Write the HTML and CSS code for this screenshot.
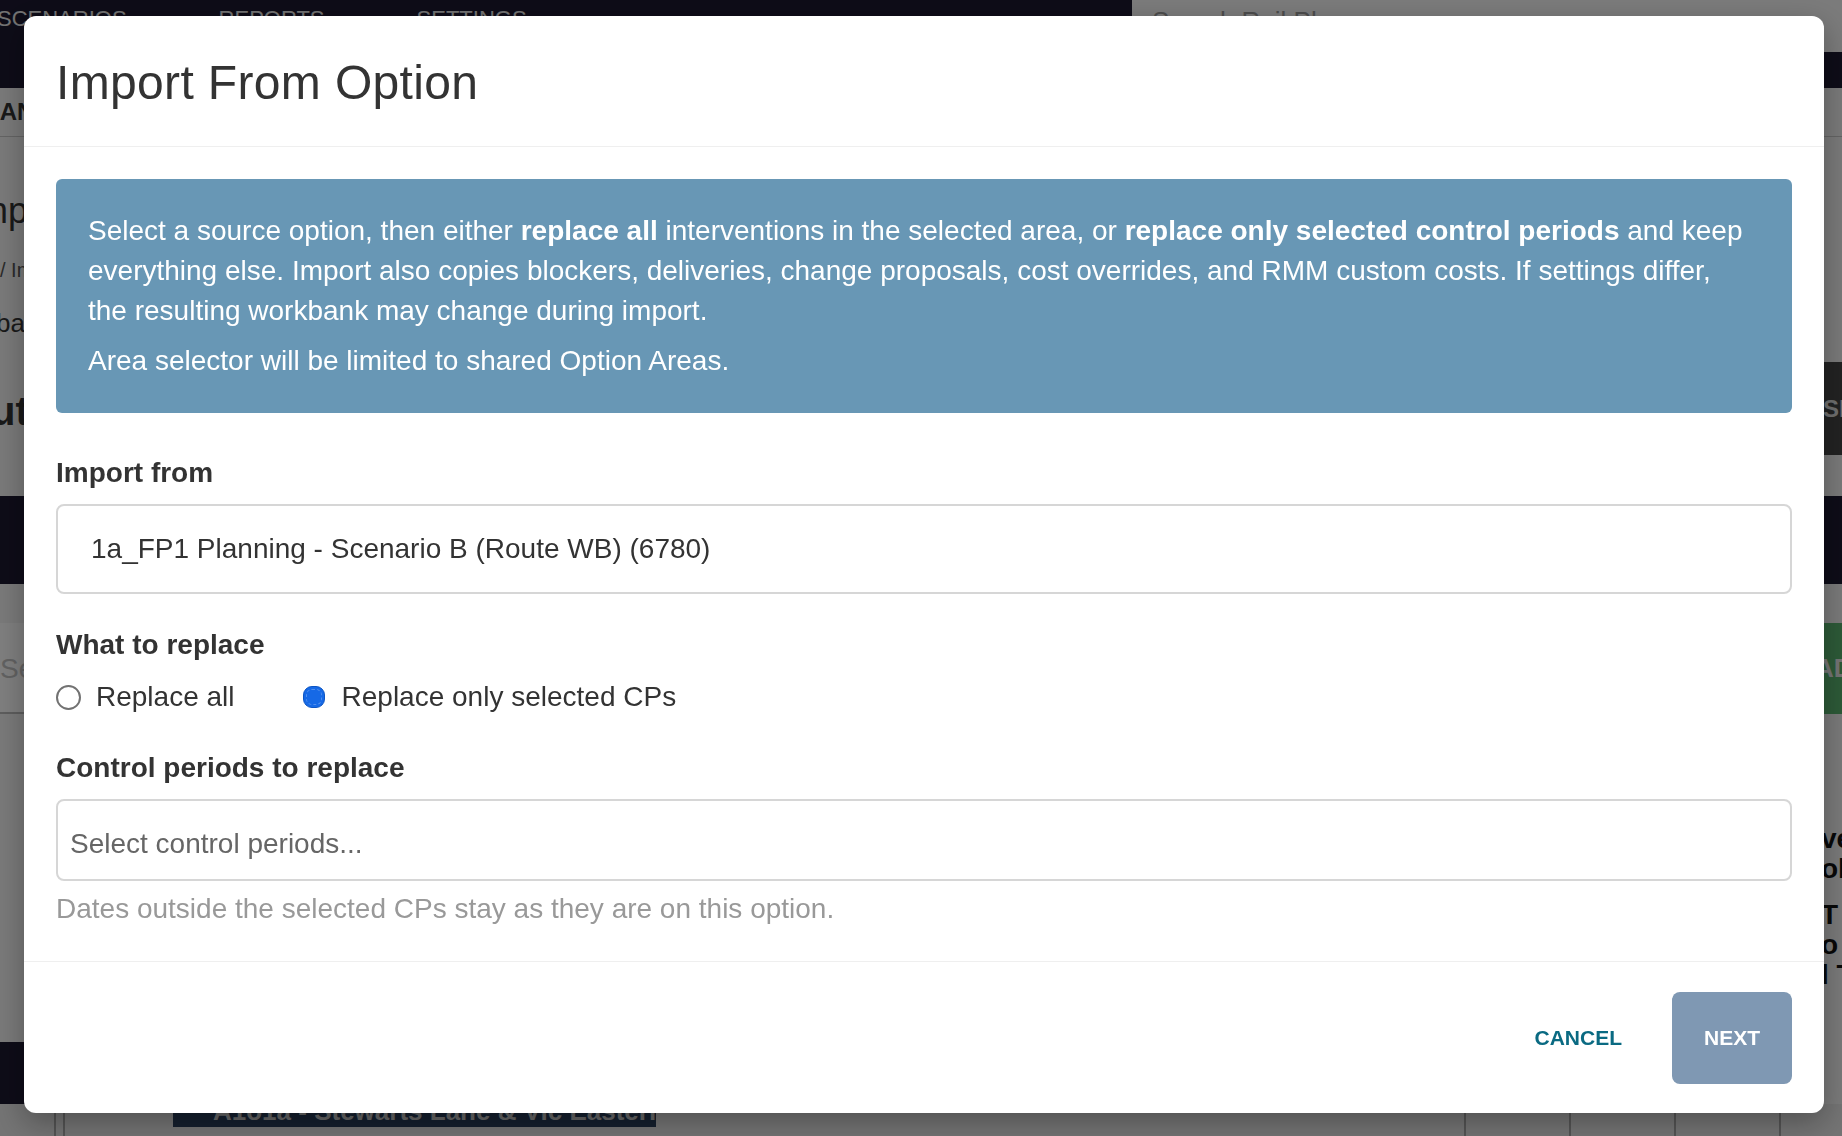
FILE: index.html
```html
<!DOCTYPE html>
<html lang="en">
<head>
    <meta charset="UTF-8">
    <meta name="viewport" content="width=device-width, initial-scale=1.0">
    <title>Import From Option</title>
    <link rel="stylesheet" href="styles.css">
</head>
<body>
    <div class="app">
        <header class="topbar">
            <nav class="topbar-nav">
                <a class="nav-link">SCENARIOS</a>
                <a class="nav-link">REPORTS</a>
                <a class="nav-link">SETTINGS</a>
            </nav>
            <div class="topbar-side">
                <div class="search-field">Search Rail Plans</div>
                <div class="account-bar"></div>
            </div>
        </header>

        <div class="subnav">PLANNING</div>

        <section class="overview">
            <div class="overview-text">
                <h1 class="page-title">Import Options</h1>
                <div class="crumbs">/ Import / Options</div>
                <p class="page-sub">ba</p>
                <h2 class="page-heading">Output</h2>
            </div>
            <aside class="overview-side">
                <div class="side-box">SIM</div>
            </aside>
        </section>

        <div class="band"></div>

        <section class="toolbar">
            <div class="toolbar-main">
                <div class="search-input">Search</div>
            </div>
            <aside class="toolbar-side">
                <div class="add-btn">ADD</div>
                <div class="side-notes">
                    <p>ve</p>
                    <p>ol</p>
                    <p class="gap">T</p>
                    <p>o</p>
                    <p>l T</p>
                </div>
            </aside>
        </section>

        <div class="table-head"></div>
        <div class="table-row">
            <div class="cell cell-a"></div>
            <div class="cell cell-b"></div>
            <div class="cell cell-route"><span class="route-tag">A1o1a - Stewarts Lane &amp; Vic Eastern</span></div>
            <div class="cell cell-c"></div>
            <div class="cell cell-c"><span class="flag"></span></div>
            <div class="cell cell-c"></div>
            <div class="cell"></div>
        </div>
    </div>

    <!-- Import dialog -->
    <div class="modal-backdrop">
        <div class="modal">
            <div class="modal-header">
                <h4 class="modal-title">Import From Option</h4>
            </div>

            <div class="modal-body">
                <div class="alert-info">
                    <p>Select a source option, then either <b>replace all</b> interventions in the selected area, or <b>replace only selected control periods</b> and keep everything else. Import also copies blockers, deliveries, change proposals, cost overrides, and RMM custom costs. If settings differ, the resulting workbank may change during import.</p>
                    <p>Area selector will be limited to shared Option Areas.</p>
                </div>

                <div class="form-group">
                    <label class="field-label">Import from</label>
                    <div class="select-box">1a_FP1 Planning - Scenario B (Route WB) (6780)</div>
                </div>

                <div class="form-group">
                    <div class="field-label label-tight">What to replace</div>
                    <div class="radio-row">
                        <label class="radio-option">
                            <span class="radio"></span>
                            Replace all
                        </label>
                        <label class="radio-option">
                            <span class="radio checked"></span>
                            Replace only selected CPs
                        </label>
                    </div>
                </div>

                <div class="form-group last">
                    <label class="field-label">Control periods to replace</label>
                    <div class="multi-select">Select control periods...</div>
                    <p class="help-block">Dates outside the selected CPs stay as they are on this option.</p>
                </div>
            </div>

            <div class="modal-footer">
                <button class="btn-cancel">CANCEL</button>
                <button class="btn-next">NEXT</button>
            </div>
        </div>
    </div>
</body>
</html>
```

FILE: styles.css
```css
* {
    margin: 0;
    padding: 0;
    box-sizing: border-box;
}

html, body {
    width: 100%;
    height: 100%;
}

body {
    font-family: "Liberation Sans", Arial, Helvetica, sans-serif;
    background: #f4f4f4;
    color: #333;
    overflow: hidden;
}

/* Page behind the dialog */
.app {
    height: 100vh;
    display: flex;
    flex-direction: column;
    overflow: hidden;
}

.topbar {
    display: flex;
    height: 88px;
    flex-shrink: 0;
}

.topbar-nav {
    width: 1132px;
    background: #1c1930;
    display: flex;
    gap: 92px;
    padding-top: 6px;
}

.nav-link {
    color: #e6e6e6;
    font-size: 22px;
    line-height: 26px;
}

.nav-link:first-child {
    margin-left: -3px;
}

.topbar-side {
    flex: 1;
    display: flex;
    flex-direction: column;
}

.search-field {
    height: 52px;
    background: #f7f7f7;
    padding: 6px 20px;
    font-size: 26px;
    color: #9a9a9a;
}

.account-bar {
    flex: 1;
    background: #1c1930;
}

.subnav {
    height: 49px;
    flex-shrink: 0;
    border-bottom: 1px solid #c8c8c8;
    font-size: 24px;
    font-weight: bold;
    line-height: 48px;
    text-indent: -31px;
    color: #333;
}

.overview {
    height: 359px;
    flex-shrink: 0;
    display: flex;
    justify-content: space-between;
}

.page-title {
    margin-top: 54px;
    font-size: 36px;
    line-height: 40px;
    font-weight: normal;
    text-indent: -32px;
}

.crumbs {
    margin-top: 27px;
    font-size: 20px;
    line-height: 24px;
    color: #555;
}

.page-sub {
    margin-top: 29px;
    font-size: 26px;
    line-height: 24px;
    text-indent: -4px;
}

.page-heading {
    margin-top: 52px;
    font-size: 40px;
    line-height: 48px;
    font-weight: bold;
    text-indent: -40px;
}

.overview-side {
    width: 120px;
}

.side-box {
    margin-top: 225px;
    height: 93px;
    background: #454545;
    color: #ddd;
    font-size: 24px;
    font-weight: bold;
    line-height: 93px;
    padding-left: 101px;
    white-space: nowrap;
    overflow: hidden;
}

.band {
    height: 88px;
    flex-shrink: 0;
    background: #1c1930;
}

.toolbar {
    height: 458px;
    flex-shrink: 0;
    display: flex;
    justify-content: space-between;
}

.search-input {
    margin-top: 39px;
    width: 400px;
    height: 91px;
    background: #fff;
    border-bottom: 2px solid #bbb;
    font-size: 28px;
    line-height: 91px;
    color: #c4c4c4;
}

.toolbar-side {
    width: 120px;
}

.add-btn {
    margin-top: 39px;
    height: 91px;
    background: #5ab470;
    color: #e8e8e8;
    font-size: 26px;
    font-weight: bold;
    line-height: 91px;
    padding-left: 93px;
    white-space: nowrap;
    overflow: hidden;
}

.side-notes {
    margin-top: 110px;
    padding-left: 99px;
    font-size: 28px;
    font-weight: bold;
    line-height: 30px;
    color: #111;
    white-space: nowrap;
}

.side-notes .gap {
    margin-top: 16px;
}

.table-head {
    width: 1100px;
    height: 62px;
    flex-shrink: 0;
    background: #1c1930;
}

.table-row {
    display: flex;
    height: 40px;
    flex-shrink: 0;
    background: #e8e8e8;
}

.cell {
    height: 100%;
    border-right: 2px solid #a8a8a8;
}

.cell:last-child {
    flex: 1;
    border-right: 0;
}

.cell-a {
    width: 56px;
}

.cell-b {
    width: 9px;
}

.cell-route {
    width: 1401px;
    padding-left: 108px;
}

.route-tag {
    display: block;
    width: 483px;
    height: 23px;
    background: #2a3f5c;
    color: #ccc;
    font-size: 26px;
    font-weight: bold;
    line-height: 14px;
    white-space: nowrap;
    overflow: hidden;
    padding-left: 40px;
}

.cell-c {
    width: 105px;
    position: relative;
}

.flag {
    position: absolute;
    left: 50px;
    bottom: 0;
    width: 10px;
    height: 6px;
    background: #d8d000;
}

/* Dialog */
.modal-backdrop {
    position: fixed;
    top: 0;
    left: 0;
    width: 100%;
    height: 100%;
    background: rgba(0, 0, 0, 0.5);
    padding: 16px 0 0 24px;
    z-index: 100;
}

.modal {
    width: 1800px;
    background: #fff;
    border-radius: 12px;
    box-shadow: 0 10px 30px rgba(0, 0, 0, 0.3);
}

.modal-header {
    padding: 38px 32px 34px;
    border-bottom: 1px solid #efefef;
}

.modal-title {
    font-size: 48px;
    line-height: 58px;
    font-weight: normal;
    letter-spacing: 0.35px;
    color: #333;
}

.modal-body {
    padding: 32px 32px 32px;
}

.alert-info {
    background: #6897b5;
    color: #fff;
    border-radius: 6px;
    padding: 32px 43px 32px 32px;
    margin-bottom: 40px;
    font-size: 28px;
    line-height: 40px;
}

.alert-info p + p {
    margin-top: 10px;
}

.form-group {
    margin-bottom: 31px;
}

.form-group.last {
    margin-bottom: 0;
}

.field-label {
    display: block;
    font-size: 28px;
    line-height: 40px;
    font-weight: bold;
    color: #333;
    margin-bottom: 11px;
}

.field-label.label-tight {
    margin-bottom: 12px;
}

.select-box {
    height: 90px;
    border: 2px solid #d6d6d6;
    border-radius: 8px;
    padding-left: 33px;
    font-size: 28px;
    line-height: 86px;
    color: #333;
}

.radio-row {
    display: flex;
    align-items: center;
    height: 40px;
    gap: 67px;
}

.radio-option {
    display: flex;
    align-items: center;
    font-size: 28px;
    line-height: 40px;
    color: #333;
}

.radio {
    width: 25px;
    height: 25px;
    border: 2px solid #727272;
    border-radius: 50%;
    background: #fff;
    margin-right: 15px;
}

.radio.checked {
    width: 22px;
    height: 22px;
    margin-left: 1px;
    margin-right: 17px;
    border: 1px solid #0c55c4;
    border-radius: 9px;
    background: #1669e6;
    outline: 1px dashed rgba(255, 255, 255, 0.25);
    outline-offset: -4px;
}

.multi-select {
    height: 82px;
    border: 2px solid #d6d6d6;
    border-radius: 8px;
    padding: 10px 12px 0;
    font-size: 28px;
    line-height: 66px;
    color: #666;
}

.help-block {
    margin-top: 8px;
    font-size: 28px;
    line-height: 40px;
    color: #999;
}

.modal-footer {
    display: flex;
    justify-content: flex-end;
    gap: 18px;
    padding: 30px 32px 29px;
    border-top: 1px solid #efefef;
}

.btn-cancel,
.btn-next {
    height: 92px;
    padding: 0 32px;
    border: 0;
    border-radius: 8px;
    font-family: "Liberation Sans", Arial, Helvetica, sans-serif;
    font-size: 21px;
    font-weight: bold;
    cursor: pointer;
}

.btn-cancel {
    background: transparent;
    color: #0a6a82;
}

.btn-next {
    background: #7f98b3;
    color: #fff;
}
```
